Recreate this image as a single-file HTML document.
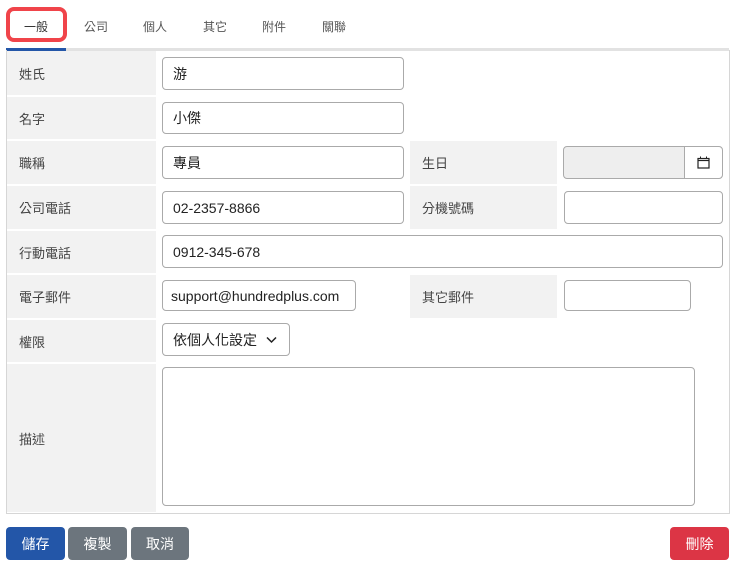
<!DOCTYPE html>
<html><head><meta charset="utf-8"><style>
*{box-sizing:border-box;margin:0;padding:0}
body{width:735px;height:578px;background:#fff;font-family:"Liberation Sans","Noto Sans CJK TC",sans-serif;font-size:14px;color:#212529;position:relative;overflow:hidden}
.a{position:absolute}
.tab{position:absolute;top:18px;font-size:12px;color:#555}
.lab{position:absolute;background:#f2f2f2;color:#444;font-size:13px;display:flex;align-items:center;padding-left:12px}
.in{position:absolute;border:1px solid #aaa;border-radius:4px;background:#fff;font-size:14px;display:flex;align-items:center;padding-left:10px;color:#222}
.btn{position:absolute;top:527px;height:33px;border-radius:4px;color:#fff;font-size:14px;display:flex;align-items:center;justify-content:center}
</style></head><body>
<div class="a" style="left:6px;top:7px;width:61px;height:35px;border:4px solid #f0444a;border-radius:8px"></div>
<div class="tab" style="left:24px;color:#333">一般</div>
<div class="tab" style="left:84px">公司</div>
<div class="tab" style="left:143px">個人</div>
<div class="tab" style="left:203px">其它</div>
<div class="tab" style="left:262px">附件</div>
<div class="tab" style="left:322px">關聯</div>
<div class="a" style="left:6px;top:48px;width:723px;height:3px;background:#e2e2e2"></div>
<div class="a" style="left:6px;top:48px;width:60px;height:3px;background:#2356a8"></div>
<div class="a" style="left:6px;top:50px;width:724px;height:464px;border:1px solid #d6d6d6;border-top:none"></div>

<div class="lab" style="left:7px;top:51px;width:149px;height:44px">姓氏</div>
<div class="lab" style="left:7px;top:97px;width:149px;height:42px">名字</div>
<div class="lab" style="left:7px;top:141px;width:149px;height:43px">職稱</div>
<div class="lab" style="left:7px;top:186px;width:149px;height:43px">公司電話</div>
<div class="lab" style="left:7px;top:231px;width:149px;height:42px">行動電話</div>
<div class="lab" style="left:7px;top:275px;width:149px;height:43px">電子郵件</div>
<div class="lab" style="left:7px;top:320px;width:149px;height:42px">權限</div>
<div class="lab" style="left:7px;top:364px;width:149px;height:148px">描述</div>
<div class="lab" style="left:410px;top:141px;width:147px;height:43px">生日</div>
<div class="lab" style="left:410px;top:186px;width:147px;height:43px">分機號碼</div>
<div class="lab" style="left:410px;top:275px;width:147px;height:43px">其它郵件</div>

<div class="in" style="left:162px;top:57px;width:242px;height:33px">游</div>
<div class="in" style="left:162px;top:102px;width:242px;height:32px">小傑</div>
<div class="in" style="left:162px;top:146px;width:242px;height:33px">專員</div>
<div class="in" style="left:563px;top:146px;width:160px;height:33px;background:#eee;padding:0"></div>
<div class="a" style="left:684px;top:147px;width:38px;height:31px;background:#fff;border-left:1px solid #aaa;border-radius:0 4px 4px 0;display:flex;align-items:center;justify-content:center">
<svg width="13" height="13" viewBox="0 0 13 13"><rect x="1" y="2.5" width="11" height="9.5" fill="none" stroke="#222" stroke-width="1.2"/><line x1="1" y1="4.5" x2="12" y2="4.5" stroke="#222" stroke-width="1.2"/><line x1="3.5" y1="0.5" x2="3.5" y2="3" stroke="#222"/><line x1="9.5" y1="0.5" x2="9.5" y2="3" stroke="#222"/></svg></div>
<div class="in" style="left:162px;top:191px;width:242px;height:33px">02-2357-8866</div>
<div class="in" style="left:564px;top:191px;width:159px;height:33px"></div>
<div class="in" style="left:162px;top:235px;width:561px;height:33px">0912-345-678</div>
<div class="in" style="left:162px;top:280px;width:194px;height:31px;padding-left:8px">support@hundredplus.com</div>
<div class="in" style="left:564px;top:280px;width:127px;height:31px"></div>
<div class="in" style="left:162px;top:323px;width:128px;height:33px">依個人化設定
<svg class="a" style="left:103px;top:12px" width="11" height="8" viewBox="0 0 11 8"><path d="M1 1.5l4.5 4.5 4.5-4.5" fill="none" stroke="#222" stroke-width="1.5"/></svg></div>
<div class="in" style="left:162px;top:367px;width:533px;height:139px"></div>

<div class="btn" style="left:6px;width:59px;background:#2356a8">儲存</div>
<div class="btn" style="left:68px;width:59px;background:#6c757d">複製</div>
<div class="btn" style="left:131px;width:58px;background:#6c757d">取消</div>
<div class="btn" style="left:670px;width:59px;background:#dc3545">刪除</div>
</body></html>
